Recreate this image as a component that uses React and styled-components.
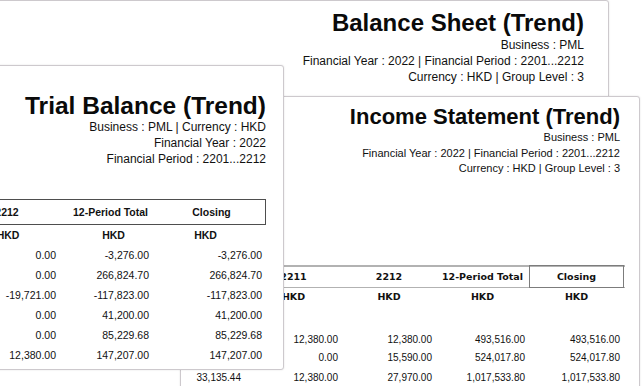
import React from "react";
import styled, { createGlobalStyle } from "styled-components";

const Global = createGlobalStyle`
  html, body { margin: 0; padding: 0; background: #ffffff; overflow: hidden; }
  body { font-family: "Liberation Sans", Arial, sans-serif; color: #111; }
`;

const Canvas = styled.div`
  position: relative;
  width: 644px;
  height: 386px;
  overflow: hidden;
  background: #ffffff;
`;

const Page = styled.div`
  position: absolute;
  left: ${(p) => p.$left}px;
  top: ${(p) => p.$top}px;
  width: ${(p) => p.$width}px;
  height: ${(p) => p.$height}px;
  z-index: ${(p) => p.$z};
  box-sizing: border-box;
  background: #fff;
  border: 1px solid #cdc9cd;
  border-radius: 3px;
  box-shadow: 0 0 2px rgba(0, 0, 0, 0.12);
  padding: ${(p) => p.$pad};
  display: flex;
  flex-direction: column;
`;

const Header = styled.div`
  display: flex;
  flex-direction: column;
  align-items: flex-end;
  text-align: right;
  padding-right: ${(p) => p.$pr || 0}px;
`;

const Title = styled.div`
  font-family: "Liberation Sans", Arial, sans-serif;
  font-weight: bold;
  font-size: ${(p) => p.$size}px;
  line-height: ${(p) => p.$lh}px;
  color: #0a0a0a;
  white-space: nowrap;
`;

const Sub = styled.div`
  font-size: ${(p) => p.$size}px;
  line-height: ${(p) => p.$lh}px;
  color: #111;
  white-space: nowrap;
`;

/* Trial balance table */
const TBTable = styled.div`
  margin-top: ${(p) => p.$mt}px;
  display: flex;
  flex-direction: column;
`;

const TBGrid = styled.div`
  display: grid;
  grid-template-columns: 1fr 104px 93px 113px;
  align-items: center;
  height: ${(p) => p.$h}px;
  box-sizing: border-box;
  ${(p) => (p.$boxed ? "border: 1px solid #4e4e4e;" : "")}
`;

const TBHead = styled.div`
  font-weight: bold;
  font-size: 10.5px;
  text-align: center;
  padding-left: ${(p) => p.$pl || 0}px;
  padding-right: ${(p) => p.$pr || 0}px;
  white-space: nowrap;
`;

const TBNum = styled.div`
  font-size: 10.5px;
  text-align: right;
  padding-right: 4px;
  white-space: nowrap;
`;

/* Income statement table */
const ISTable = styled.div`
  margin-top: ${(p) => p.$mt}px;
  display: flex;
  flex-direction: column;
  margin-left: -1px;
`;

const ISGrid = styled.div`
  display: grid;
  grid-template-columns: 65px 97px 94px 93px 95px;
  align-items: stretch;
  height: ${(p) => p.$h}px;
  margin-top: ${(p) => p.$mt || 0}px;
  box-sizing: border-box;
  ${(p) =>
    p.$head
      ? "border-top: 2px solid #b2b2b2; border-bottom: 1px solid #b2b2b2;"
      : ""}
`;

const ISHead = styled.div`
  font-family: "DejaVu Sans", Verdana, sans-serif;
  font-weight: bold;
  font-size: 9.5px;
  display: flex;
  align-items: center;
  justify-content: center;
  white-space: nowrap;
  box-sizing: border-box;
  ${(p) =>
    p.$boxed
      ? "border: 1px solid #7c7c7c; margin: -2px 0 -1px 0;"
      : ""}
`;

const ISNum = styled.div`
  font-size: 10px;
  display: flex;
  align-items: center;
  justify-content: flex-end;
  padding-right: 4px;
  white-space: nowrap;
`;

const Spacer = styled.div`
  height: ${(p) => p.$h}px;
`;

const tbRows = [
  ["0.00", "-3,276.00", "-3,276.00"],
  ["0.00", "266,824.70", "266,824.70"],
  ["-19,721.00", "-117,823.00", "-117,823.00"],
  ["0.00", "41,200.00", "41,200.00"],
  ["0.00", "85,229.68", "85,229.68"],
  ["12,380.00", "147,207.00", "147,207.00"],
];

const isRows = [
  ["", "12,380.00", "12,380.00", "493,516.00", "493,516.00"],
  ["", "0.00", "15,590.00", "524,017.80", "524,017.80"],
  ["33,135.44", "12,380.00", "27,970.00", "1,017,533.80", "1,017,533.80"],
];

export default function App() {
  return (
    <Canvas>
      <Global />

      <Page $left={-30} $top={0} $width={639} $height={200} $z={1} $pad="7px 24px 0 0">
        <Header>
          <Title $size={24} $lh={29}>Balance Sheet (Trend)</Title>
          <Sub $size={12} $lh={16}>Business : PML</Sub>
          <Sub $size={12} $lh={16}>
            Financial Year : 2022 | Financial Period : 2201...2212
          </Sub>
          <Sub $size={12} $lh={16}>Currency : HKD | Group Level : 3</Sub>
        </Header>
      </Page>

      <Page $left={180} $top={96} $width={460} $height={320} $z={2} $pad="6px 14px 0 0">
        <Header $pr={5}>
          <Title $size={22} $lh={27}>Income Statement (Trend)</Title>
          <Sub $size={11} $lh={15.5}>Business : PML</Sub>
          <Sub $size={11} $lh={15.5}>
            Financial Year : 2022 | Financial Period : 2201...2212
          </Sub>
          <Sub $size={11} $lh={15.5}>Currency : HKD | Group Level : 3</Sub>
        </Header>
        <ISTable $mt={88}>
          <ISGrid $head $h={23}>
            <ISHead />
            <ISHead>2211</ISHead>
            <ISHead>2212</ISHead>
            <ISHead>12-Period Total</ISHead>
            <ISHead $boxed>Closing</ISHead>
          </ISGrid>
          <ISGrid $h={18}>
            {["", "HKD", "HKD", "HKD", "HKD"].map((c, i) => (
              <ISHead key={i}>{c}</ISHead>
            ))}
          </ISGrid>
          <Spacer $h={25} />
          {isRows.map((r, ri) => (
            <ISGrid key={ri} $h={18} $mt={ri === 2 ? 2 : 0}>
              {r.map((c, ci) => (
                <ISNum key={ci}>{c}</ISNum>
              ))}
            </ISGrid>
          ))}
        </ISTable>
      </Page>

      <Page $left={-116} $top={65} $width={400} $height={305} $z={3} $pad="26px 17px 0 0">
        <Header>
          <Title $size={24.5} $lh={27}>Trial Balance (Trend)</Title>
          <Sub $size={12} $lh={16}>Business : PML | Currency : HKD</Sub>
          <Sub $size={12} $lh={16}>Financial Year : 2022</Sub>
          <Sub $size={12} $lh={16}>Financial Period : 2201...2212</Sub>
        </Header>
        <TBTable $mt={32}>
          <TBGrid $boxed $h={26}>
            <TBHead />
            <TBHead>2212</TBHead>
            <TBHead $pl={10}>12-Period Total</TBHead>
            <TBHead $pl={6}>Closing</TBHead>
          </TBGrid>
          <TBGrid $h={20}>
            <TBHead />
            <TBHead>HKD</TBHead>
            <TBHead $pl={14}>HKD</TBHead>
            <TBHead $pr={8}>HKD</TBHead>
          </TBGrid>
          {tbRows.map((r, ri) => (
            <TBGrid key={ri} $h={20}>
              <TBNum />
              {r.map((c, ci) => (
                <TBNum key={ci}>{c}</TBNum>
              ))}
            </TBGrid>
          ))}
        </TBTable>
      </Page>
    </Canvas>
  );
}
